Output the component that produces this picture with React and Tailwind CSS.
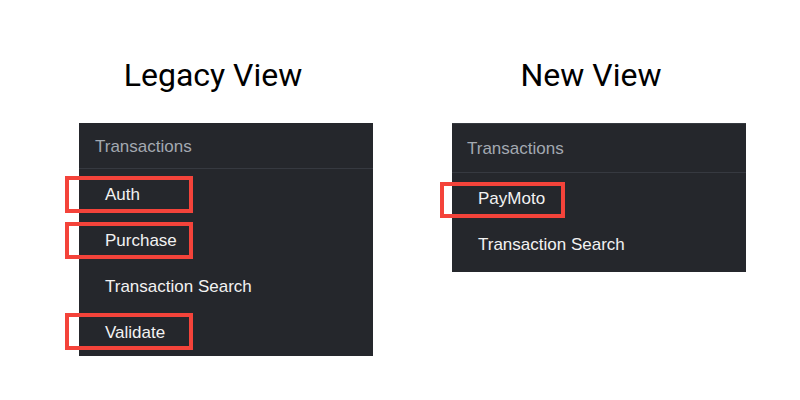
const LEGACY = ['Auth', 'Purchase', 'Transaction Search', 'Validate']
const NEW = ['PayMoto', 'Transaction Search']

function Highlight({ className }) {
  return <div className={`absolute border-[4px] border-[#f4433a] ${className}`} />
}

function Panel({ items, topLine, headerH, bottomPad, headerPl, children }) {
  return (
    <div
      className={`relative w-[294px] bg-[#25272c] ${topLine ? 'border-t border-[#363a40]' : ''}`}
      style={{ paddingBottom: bottomPad }}
    >
      <div
        className="flex items-center pt-[2px] border-b border-[#363940] text-[17px] text-[#a3a9b1]"
        style={{ height: headerH, paddingLeft: headerPl }}
      >
        Transactions
      </div>
      {items.map((item) => (
        <div key={item} className="h-[46px] flex items-center pt-[5px] pl-[26px] text-[17px] text-[#f2f2f2]">
          {item}
        </div>
      ))}
      {children}
    </div>
  )
}

export default function App() {
  return (
    <div className="w-[800px] h-[400px] bg-white flex items-start pt-[59px] pl-[79px] gap-[79px] font-['Liberation_Sans',Arial,sans-serif]">
      <div className="flex flex-col w-[294px]">
        <div className="h-[32px] leading-[32px] text-[32px] text-black text-center pr-[26px] font-['Roboto',sans-serif]">
          Legacy View
        </div>
        <div className="mt-[32px]">
          <Panel items={LEGACY} headerH={46} bottomPad={3} headerPl={16}>
            <Highlight className="left-[-14px] top-[53px] w-[128px] h-[37px]" />
            <Highlight className="left-[-14px] top-[99px] w-[128px] h-[37px]" />
            <Highlight className="left-[-14px] top-[190px] w-[128px] h-[37px]" />
          </Panel>
        </div>
      </div>
      <div className="flex flex-col w-[294px]">
        <div className="h-[32px] leading-[32px] text-[32px] text-black text-center pr-[16px] font-['Roboto',sans-serif]">
          New View
        </div>
        <div className="mt-[32px]">
          <Panel items={NEW} topLine headerH={49} bottomPad={7} headerPl={15}>
            <Highlight className="left-[-12px] top-[58px] w-[125px] h-[36px]" />
          </Panel>
        </div>
      </div>
    </div>
  )
}
